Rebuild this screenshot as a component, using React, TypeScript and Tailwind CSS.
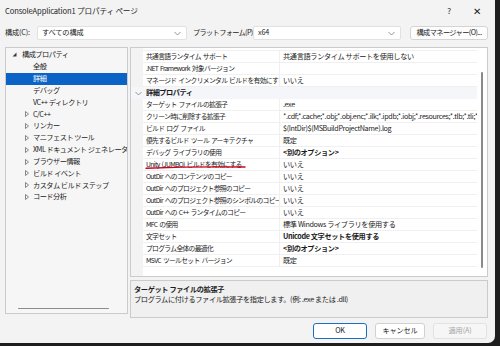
const font = "font-['Noto_Sans_CJK_JP','Lato',sans-serif]"

type Row = { label: string; value?: string; bold?: boolean; category?: boolean }

const rows: Row[] = [
  { label: '共通言語ランタイム サポート', value: '共通言語ランタイム サポートを使用しない' },
  { label: '.NET Framework 対象バージョン', value: '' },
  { label: 'マネージド インクリメンタル ビルドを有効にする', value: 'いいえ' },
  { label: '詳細プロパティ', category: true },
  { label: 'ターゲット ファイルの拡張子', value: '.exe' },
  { label: 'クリーン時に削除する拡張子', value: '*.cdf;*.cache;*.obj;*.obj.enc;*.ilk;*.ipdb;*.iobj;*.resources;*.tlb;*.tli;*.tlh' },
  { label: 'ビルド ログ ファイル', value: '$(IntDir)$(MSBuildProjectName).log' },
  { label: '優先するビルド ツール アーキテクチャ', value: '既定' },
  { label: 'デバッグ ライブラリの使用', value: '<別のオプション>', bold: true },
  { label: 'Unity (JUMBO) ビルドを有効にする', value: 'いいえ' },
  { label: 'OutDir へのコンテンツのコピー', value: 'いいえ' },
  { label: 'OutDir へのプロジェクト参照のコピー', value: 'いいえ' },
  { label: 'OutDir へのプロジェクト参照のシンボルのコピー', value: 'いいえ' },
  { label: 'OutDir への C++ ランタイムのコピー', value: 'いいえ' },
  { label: 'MFC の使用', value: '標準 Windows ライブラリを使用する' },
  { label: '文字セット', value: 'Unicode 文字セットを使用する', bold: true },
  { label: 'プログラム全体の最適化', value: '<別のオプション>', bold: true },
  { label: 'MSVC ツールセット バージョン', value: '既定' },
]

type Node = { label: string; level: number; expandable?: boolean; selected?: boolean }

const tree: Node[] = [
  { label: '構成プロパティ', level: 0 },
  { label: '全般', level: 1 },
  { label: '詳細', level: 1, selected: true },
  { label: 'デバッグ', level: 1 },
  { label: 'VC++ ディレクトリ', level: 1 },
  { label: 'C/C++', level: 1, expandable: true },
  { label: 'リンカー', level: 1, expandable: true },
  { label: 'マニフェスト ツール', level: 1, expandable: true },
  { label: 'XML ドキュメント ジェネレーター', level: 1, expandable: true },
  { label: 'ブラウザー情報', level: 1, expandable: true },
  { label: 'ビルド イベント', level: 1, expandable: true },
  { label: 'カスタム ビルド ステップ', level: 1, expandable: true },
  { label: 'コード分析', level: 1, expandable: true },
]

function Chevron() {
  return (
    <svg width="7" height="5" viewBox="0 0 7 5" className="shrink-0">
      <polyline points="0.5,1 3.5,4 6.5,1" fill="none" stroke="#8a8a8a" strokeWidth="0.9" />
    </svg>
  )
}

function Combo({ text, className }: { text: string; className: string }) {
  return (
    <div className={"h-[14px] shrink-0 bg-white border border-[#e1e1e1] rounded-[2px] flex items-center justify-between pl-[4px] pr-[5px] " + className}>
      <span>{text}</span>
      <Chevron />
    </div>
  )
}

export default function App() {
  return (
    <div className={"w-[500px] h-[346px] bg-[#1e1e1e] text-[7.2px] tracking-[-0.02em] leading-none text-[#1b1b1b] " + font}>
      <div className="w-[495px] h-[343px] bg-[#f3f3f3] rounded-br-[7px] flex flex-col overflow-hidden">
        {/* title bar */}
        <div className="h-[21px] flex items-center pl-[5px] pr-[13px] text-[7.6px]">
          <span className="flex-1">ConsoleApplication1 プロパティ ページ</span>
          <span className="w-[10px] text-center mr-[18px] text-[8px]">?</span>
          <span className="w-[10px] text-center text-[10px]">✕</span>
        </div>

        {/* config row */}
        <div className="h-[14px] mt-[5px] flex items-center pl-[5px] whitespace-nowrap">
          <span className="w-[32px] shrink-0">構成(C):</span>
          <Combo text="すべての構成" className="w-[150px]" />
          <span className="ml-[6px] w-[60px] shrink-0 tracking-[-0.09em]">プラットフォーム(P):</span>
          <Combo text="x64" className="w-[148px]" />
          <button className="ml-[9px] h-[14px] w-[78px] shrink-0 bg-[#fdfdfd] border border-[#d4d4d4] rounded-[3px] flex items-center justify-center tracking-[-0.08em]">
            構成マネージャー(O)...
          </button>
        </div>

        {/* main */}
        <div className="mt-[7px] h-[272px] flex pl-[5px]">
          {/* tree */}
          <div className="w-[123px] h-[267px] border border-[#cbcbcb] bg-[#f6f6f6] flex flex-col overflow-hidden pt-[1px] relative tracking-[-0.07em]">
            {tree.map((n) => (
              <div
                key={n.label}
                className={
                  'h-[11.85px] flex items-center whitespace-nowrap shrink-0 ' +
                  (n.selected ? 'bg-[#0b63c5] text-white' : '')
                }
              >
                {n.level === 0 ? (
                  <>
                    <svg width="5" height="5" viewBox="0 0 5 5" className="ml-[6px] mr-[5px] shrink-0">
                      <polygon points="4.5,0.5 4.5,4.5 0.5,4.5" fill="#3c3c3c" />
                    </svg>
                    <span>{n.label}</span>
                  </>
                ) : (
                  <>
                    <span className="w-[27px] shrink-0 flex justify-end pr-[4px]">
                      {n.expandable && (
                        <svg width="4" height="6" viewBox="0 0 4 6">
                          <polygon points="0.5,0.5 3.5,3 0.5,5.5" fill="none" stroke="#6a6a6a" strokeWidth="0.8" />
                        </svg>
                      )}
                    </span>
                    <span>{n.label}</span>
                  </>
                )}
              </div>
            ))}
            <div className="absolute left-[12px] bottom-[4px] w-[91px] h-[1.5px] bg-[#8c8c8c] rounded-full" />
          </div>

          {/* right side */}
          <div className="ml-[2px] w-[358px] flex flex-col">
            <div className="h-[230px] border border-[#cbcbcb] bg-white flex relative overflow-hidden">
              <div className="flex-1 flex flex-col overflow-hidden">
                <div className="h-[3px] shrink-0 flex">
                  <div className="w-[12px] bg-[#f3f3f3]" />
                  <div className="flex-1 border-b border-[#f0f0f0]" />
                </div>
                {rows.map((r) =>
                  r.category ? (
                    <div key={r.label} className="h-[12px] shrink-0 flex items-center bg-[#f4f6fa] font-bold tracking-[-0.07em]">
                      <span className="w-[15px] shrink-0 flex justify-center">
                        <Chevron />
                      </span>
                      <span>{r.label}</span>
                    </div>
                  ) : (
                    <div key={r.label} className="h-[12px] shrink-0 flex">
                      <div className="w-[12px] shrink-0 bg-[#f3f3f3]" />
                      <div className="w-[137px] shrink-0 pl-[3px] flex items-center overflow-hidden whitespace-pre border-b border-r border-[#f0f0f0] text-[6.8px] tracking-[-0.1em] [word-spacing:0.15em]">
                        {r.label}
                      </div>
                      <div
                        className={
                          'flex-1 min-w-0 pl-[3px] flex items-center overflow-hidden whitespace-nowrap border-b border-[#f0f0f0] tracking-[-0.05em] ' +
                          (r.bold ? 'font-bold' : '')
                        }
                      >
                        {r.value}
                      </div>
                    </div>
                  )
                )}
                <div className="flex-1 flex">
                  <div className="w-[12px] bg-[#f3f3f3]" />
                </div>
              </div>
              <div className="w-[10px] shrink-0 flex justify-center pt-[24px] pb-[8px]">
                <div className="w-[2px] h-full bg-[#8a8a8a] rounded-full" />
              </div>
              <svg className="absolute left-[14px] top-[116px]" width="102" height="6" viewBox="0 0 102 6">
                <path d="M1 4.2 C 28 3.2, 65 2.6, 100 3" fill="none" stroke="#d0001c" strokeWidth="1.4" strokeLinecap="round" />
              </svg>
            </div>

            <div className="mt-[3px] h-[38px] border border-[#cbcbcb] bg-[#f0f0f0] px-[3px] pt-[5px] flex flex-col gap-[3px] whitespace-nowrap tracking-[-0.05em]">
              <span className="font-bold">ターゲット ファイルの拡張子</span>
              <span>プログラムに付けるファイル拡張子を指定します。(例: .exe または .dll)</span>
            </div>
          </div>
        </div>

        {/* buttons */}
        <div className="mt-[4px] flex pl-[313px] gap-[8px]">
          <button className="w-[54px] h-[16px] bg-white border border-[#1a6fc4] rounded-[3px]">OK</button>
          <button className="w-[50px] h-[16px] bg-white border border-[#d0d0d0] rounded-[3px]">キャンセル</button>
          <button className="w-[54px] h-[16px] bg-[#f6f6f6] border border-[#e2e2e2] rounded-[3px] text-[#a5a5a5]">適用(A)</button>
        </div>
      </div>
    </div>
  )
}
